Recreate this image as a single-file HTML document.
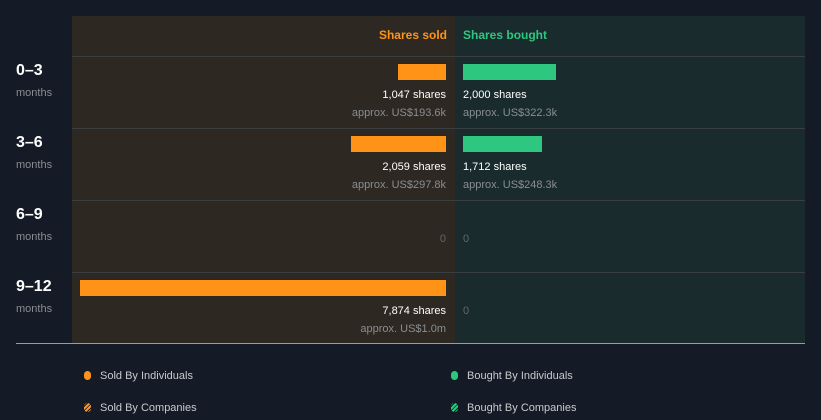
<!DOCTYPE html><html><head><style>
body{margin:0;width:821px;height:420px;background:#151b26;font-family:"Liberation Sans",sans-serif;position:relative;overflow:hidden}
div,span{position:absolute}
.s{background:#2d2822;left:72px;width:383px;top:16px;height:327px}
.b{background:#192b2d;left:455px;width:350px;top:16px;height:327px}
.ln{left:72px;width:733px;height:1px;background:#3a3d42}
.bar{height:16px}
.o{background:#ff9317}.g{background:#2ec780}
.t{font-size:11px;color:#fff;white-space:nowrap}
.a{font-size:11px;color:#8a8d91;white-space:nowrap}
.r{right:375px;text-align:right}
.l{left:463px}
.rl{left:16px;font-size:16px;font-weight:bold;color:#fff}
.m{left:16px;font-size:11px;color:#8a8d91}
.lg{font-size:11px;color:#c8cacd}
.dot{width:7px;height:9px;border-radius:4px}
</style></head><body>
<div class="s"></div><div class="b"></div>
<div style="right:374px;top:28px;font-size:12px;font-weight:bold;color:#ff9317">Shares sold</div>
<div style="left:463px;top:28px;font-size:12px;font-weight:bold;color:#2ec780">Shares bought</div>
<div class="ln" style="top:56px"></div><div class="ln" style="top:128px"></div><div class="ln" style="top:200px"></div><div class="ln" style="top:272px"></div>
<div style="left:16px;width:789px;top:343px;height:1px;background:#9a9c9f"></div>

<div class="rl" style="top:62px">0–3</div><div class="m" style="top:87px">months</div>
<div class="rl" style="top:134px">3–6</div><div class="m" style="top:159px">months</div>
<div class="rl" style="top:206px">6–9</div><div class="m" style="top:231px">months</div>
<div class="rl" style="top:278px">9–12</div><div class="m" style="top:303px">months</div>

<div class="bar o" style="left:398px;width:48px;top:64px"></div>
<div class="bar g" style="left:463px;width:93px;top:64px"></div>
<div class="t r" style="top:89px">1,047 shares</div><div class="a r" style="top:107px">approx. US$193.6k</div>
<div class="t l" style="top:89px">2,000 shares</div><div class="a l" style="top:107px">approx. US$322.3k</div>

<div class="bar o" style="left:351px;width:95px;top:136px"></div>
<div class="bar g" style="left:463px;width:79px;top:136px"></div>
<div class="t r" style="top:161px">2,059 shares</div><div class="a r" style="top:179px">approx. US$297.8k</div>
<div class="t l" style="top:161px">1,712 shares</div><div class="a l" style="top:179px">approx. US$248.3k</div>

<div class="a r" style="top:233px;color:#666">0</div><div class="a l" style="top:233px;color:#666">0</div>

<div class="bar o" style="left:80px;width:366px;top:280px"></div>
<div class="t r" style="top:305px">7,874 shares</div><div class="a r" style="top:323px">approx. US$1.0m</div>
<div class="a l" style="top:305px;color:#666">0</div>

<div class="dot o" style="left:84px;top:371px"></div><div class="lg" style="left:100px;top:370px">Sold By Individuals</div>
<div class="dot g" style="left:451px;top:371px"></div><div class="lg" style="left:467px;top:370px">Bought By Individuals</div>
<div class="dot" style="left:84px;top:403px;background:repeating-linear-gradient(135deg,#ff9317 0 2px,#151b26 2px 3px)"></div><div class="lg" style="left:100px;top:402px">Sold By Companies</div>
<div class="dot" style="left:451px;top:403px;background:repeating-linear-gradient(135deg,#2ec780 0 2px,#151b26 2px 3px)"></div><div class="lg" style="left:467px;top:402px">Bought By Companies</div>
</body></html>
